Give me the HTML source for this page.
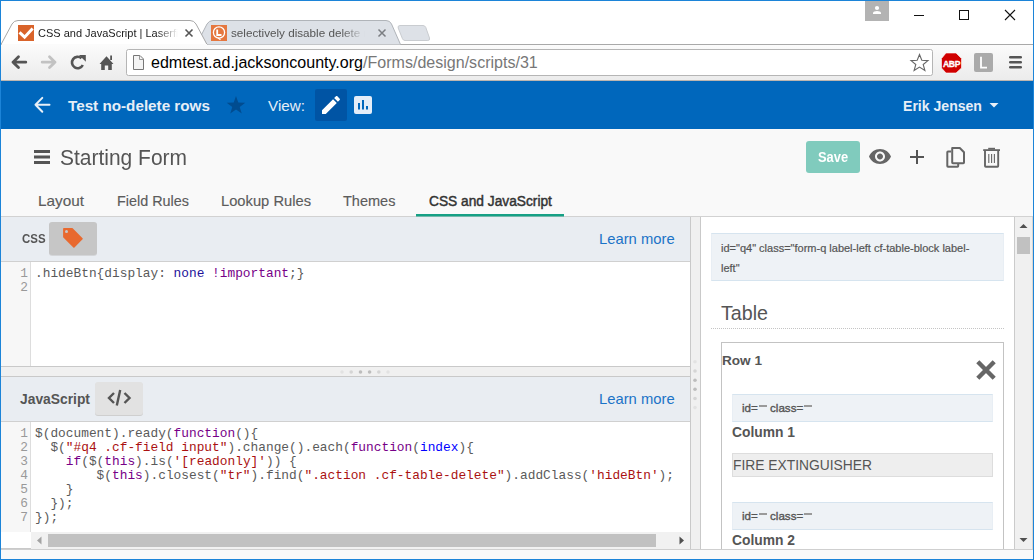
<!DOCTYPE html>
<html><head><meta charset="utf-8">
<style>
*{margin:0;padding:0;box-sizing:border-box}
html,body{width:1034px;height:560px;overflow:hidden;background:#fff;font-family:"Liberation Sans",sans-serif}
.a{position:absolute}
.nw{white-space:nowrap}
#frame{position:absolute;left:0;top:0;width:1034px;height:560px;border:1px solid #1c84d8;pointer-events:none;z-index:100}
#toolbar{left:1px;top:45px;width:1032px;height:36px;background:linear-gradient(#fbfbfb,#ebebeb)}
#hdr{left:1px;top:81px;width:1032px;height:48px;background:#0067bc}
#sub{left:1px;top:129px;width:1032px;height:88px;background:#f9f9f9;border-bottom:1px solid #d2d2d2}
.ptab{top:191px;font-size:14.6px;color:#5c5c5c;line-height:20px;-webkit-text-stroke:0.15px #5c5c5c}
.phdr{background:#e9edf2;border-bottom:1px solid #d0d0d0}
.code{font-family:"Liberation Mono",monospace;font-size:12.83px;line-height:14px;color:#5a5a5a;white-space:pre}
.ln{font-family:"Liberation Mono",monospace;font-size:12.83px;line-height:14px;color:#999;text-align:right;white-space:pre}
.k{color:#770088}.s{color:#aa1111}.at{color:#221199}.df{color:#0000ff}
.lm{font-size:14.8px;color:#1b73c7}
</style></head><body>
<div id="frame"></div>

<!-- TAB STRIP -->
<svg class="a" style="left:0;top:0" width="1034" height="46">
  <rect x="0" y="44" width="1034" height="1" fill="#a9a9a9"/>
  <path d="M196.5,44.5 L207,24 Q209,20.5 213,20.5 L386,20.5 Q390,20.5 391.5,24 L400.5,44.5" fill="#dde1e7" stroke="#b0b4b9" stroke-width="1"/>
  <path d="M400,25.5 L423,25.5 Q425,25.5 425.8,27.5 L429.5,38 Q430.2,40.5 427.8,40.5 L405,40.5 Q403.2,40.5 402.5,38.8 L398.2,28 Q397.5,25.5 400,25.5 Z" fill="#dde1e7" stroke="#c9ccd0"/>
  <path d="M1,44.5 L12,24 Q14,20.5 18,20.5 L190,20.5 Q194,20.5 196,24 L207,44.5" fill="#fff" stroke="#a7a7a7" stroke-width="1"/>
  <rect x="2" y="44" width="205" height="1" fill="#fbfbfb"/>
  <!-- active favicon -->
  <rect x="18" y="25" width="16" height="16" fill="#d9632a"/>
  <path d="M20.6,33.4 L24.6,37.2 L31.6,29.6" fill="none" stroke="#fff" stroke-width="3" stroke-linecap="square"/>
  <!-- close x active -->
  <path d="M185.5,29.5 L192.5,36.5 M192.5,29.5 L185.5,36.5" stroke="#555" stroke-width="1.6"/>
  <!-- inactive favicon -->
  <rect x="211" y="25" width="16" height="16" fill="#e5773f"/>
  <circle cx="219" cy="32.5" r="5.6" fill="none" stroke="#fff" stroke-width="1.3"/>
  <path d="M217.2,29.5 L217.2,35 L221.5,35" fill="none" stroke="#fff" stroke-width="1.8"/>
  <path d="M218,38 L220.5,39.8" stroke="#fff" stroke-width="1.2"/>
  <path d="M378.5,29.5 L385.5,36.5 M385.5,29.5 L378.5,36.5" stroke="#7b7e82" stroke-width="1.5"/>
  <!-- window controls -->
  <rect x="865" y="1" width="24" height="20" fill="#b3b3b3"/>
  <circle cx="877" cy="8" r="2.1" fill="#fff"/>
  <path d="M873,14 L873,12.8 Q873.5,10.9 877,10.9 Q880.5,10.9 881,12.8 L881,14 Z" fill="#fff"/>
  <rect x="914" y="15" width="10" height="1" fill="#111"/>
  <rect x="959.5" y="10.5" width="9" height="9" fill="none" stroke="#111" stroke-width="1"/>
  <path d="M1005,10 L1015,20 M1015,10 L1005,20" stroke="#111" stroke-width="1.1"/>
</svg>
<div class="a nw" style="left:38px;top:24px;font-size:11px;line-height:18px;color:#222;width:140px;overflow:hidden;-webkit-mask-image:linear-gradient(90deg,#000 85%,transparent)">CSS and JavaScript | Laserfiche Forms</div>
<div class="a nw" style="left:231px;top:24px;font-size:11.7px;line-height:18px;color:#555;width:138px;overflow:hidden;-webkit-mask-image:linear-gradient(90deg,#000 80%,transparent 97%)">selectively disable delete rows</div>

<!-- TOOLBAR -->
<div class="a" id="toolbar"></div>
<svg class="a" style="left:0;top:44px" width="1034" height="37">
  <!-- back -->
  <path d="M13,18.2 L25.8,18.2 M18.5,12.8 L13,18.2 L18.5,23.6" fill="none" stroke="#555" stroke-width="2.8" stroke-linecap="round" stroke-linejoin="round"/>
  <path d="M55,18.2 L42.2,18.2 M49.5,12.8 L55,18.2 L49.5,23.6" fill="none" stroke="#c2c2c2" stroke-width="2.8" stroke-linecap="round" stroke-linejoin="round"/>
  <!-- reload -->
  <path d="M81.5,14.3 A5.7,5.7 0 1 0 82.8,21" fill="none" stroke="#555" stroke-width="2.6"/>
  <path d="M79,11 L85.8,11 L85.8,17.8 Z" fill="#555"/>
  <!-- home -->
  <path d="M99.5,20 L106.5,12.2 L113.5,20 L111.8,20 L111.8,26 L108.2,26 L108.2,21.5 L104.8,21.5 L104.8,26 L101.2,26 L101.2,20 Z" fill="#555"/>
  <rect x="110.2" y="11.5" width="1.8" height="4.5" fill="#555"/>
  <!-- omnibox -->
  <rect x="126.5" y="5.5" width="806" height="26" rx="2" fill="#fff" stroke="#b5b5b5"/>
  <path d="M133.5,11.5 L140,11.5 L143.5,15 L143.5,25.5 L133.5,25.5 Z" fill="#f4f4f4" stroke="#777"/>
  <path d="M139.5,11.5 L139.5,15.5 L143.5,15.5" fill="none" stroke="#999"/>
  <!-- star -->
  <path d="M919.5,10.5 L921.8,16.3 L928,16.6 L923.2,20.5 L924.9,26.5 L919.5,23.1 L914.1,26.5 L915.8,20.5 L911,16.6 L917.2,16.3 Z" fill="none" stroke="#666" stroke-width="1.1"/>
  <!-- abp -->
  <path d="M946,9 L956,9 L961.5,14.5 L961.5,24 L956,29 L946,29 L941.5,24 L941.5,14.5 Z" fill="#d00000" stroke="#fff" stroke-width="0.6"/>
  <text x="951.5" y="22.5" font-family="Liberation Sans" font-weight="bold" font-size="8.6" letter-spacing="-0.4" fill="#fff" stroke="#fff" stroke-width="0.3" text-anchor="middle">ABP</text>
  <!-- L -->
  <rect x="974" y="9" width="19" height="19" rx="2" fill="#aaa"/>
  <path d="M981,12.7 L981,23.6 L987,23.6" fill="none" stroke="#fff" stroke-width="1.8"/>
  <!-- menu -->
  <rect x="1009" y="12" width="13" height="2.6" rx="1.3" fill="#555"/>
  <rect x="1009" y="17" width="13" height="2.6" rx="1.3" fill="#555"/>
  <rect x="1009" y="22" width="13" height="2.6" rx="1.3" fill="#555"/>
  <rect x="0" y="36" width="1034" height="1" fill="#bdb6b0"/>
</svg>
<div class="a nw" style="left:151px;top:52px;font-size:16.06px;line-height:20px;color:#000">edmtest.ad.jacksoncounty.org<span style="color:#777">/Forms/design/scripts/31</span></div>

<!-- BLUE HEADER -->
<div class="a" id="hdr"></div>
<svg class="a" style="left:0;top:81px" width="1034" height="48">
  <path d="M35.5,23.8 L49.5,23.8 M42.3,16.9 L35.5,23.8 L42.3,30.7" fill="none" stroke="#e8f0f8" stroke-width="2" stroke-linecap="round" stroke-linejoin="round"/>
  <path d="M236.00,14.92 L238.29,21.54 L245.30,21.68 L239.71,25.91 L241.75,32.61 L236.00,28.60 L230.25,32.61 L232.29,25.91 L226.70,21.68 L233.71,21.54 Z" fill="#004c90"/>
  <rect x="315" y="8" width="32" height="32" rx="2" fill="#0054a4"/>
  <path transform="translate(319,12)" d="M3 17.25V21h3.75L17.81 9.94l-3.75-3.75L3 17.25zM20.71 7.04c.39-.39.39-1.02 0-1.41l-2.34-2.34c-.39-.39-1.02-.39-1.41 0l-1.83 1.83 3.75 3.75 1.830-1.83z" fill="#fff"/>
  <rect x="354" y="15" width="18" height="18" rx="2" fill="#e3edf8"/>
  <rect x="358" y="22" width="2" height="6.5" fill="#0067bc"/>
  <rect x="362" y="19" width="2" height="9.5" fill="#0067bc"/>
  <rect x="366" y="25" width="2" height="3.5" fill="#0067bc"/>
  <path d="M989.5,103 L998.5,103 L994,107.5 Z" transform="translate(0,-81)" fill="#e8f0f8"/>
</svg>
<div class="a nw" style="left:68px;top:96px;font-size:15.24px;line-height:20px;font-weight:bold;color:#e6eef7">Test no-delete rows</div>
<div class="a nw" style="left:268px;top:96px;font-size:15.24px;line-height:20px;color:#e6eef7">View:</div>
<div class="a nw" style="left:903px;top:96px;font-size:14.07px;line-height:20px;font-weight:bold;color:#e6eef7">Erik Jensen</div>

<!-- SUB HEADER -->
<div class="a" id="sub"></div>
<svg class="a" style="left:0;top:129px" width="1034" height="88">
  <rect x="34" y="21" width="16" height="3" fill="#555"/>
  <rect x="34" y="26.5" width="16" height="3" fill="#555"/>
  <rect x="34" y="32" width="16" height="3" fill="#555"/>
  <rect x="806" y="12" width="54" height="32" rx="3" fill="#80cbbd"/>
  <!-- eye -->
  <path transform="translate(868,15.5)" d="M12 4.5C7 4.5 2.73 7.610 1 12c1.73 4.39 6 7.5 11 7.5s9.27-3.11 11-7.5c-1.73-4.39-6-7.5-11-7.5zM12 17c-2.76 0-5-2.24-5-5s2.24-5 5-5 5 2.24 5 5-2.24 5-5 5zm0-8c-1.66 0-3 1.34-3 3s1.34 3 3 3 3-1.34 3-3-1.34-3-3-3z" fill="#666"/>
  <!-- plus -->
  <path d="M917,21 L917,35 M910,28 L924,28" stroke="#555" stroke-width="2"/>
  <!-- copy -->
  <path d="M951,22.5 L948,22.5 Q947.3,22.5 947.3,23.2 L947.3,37 Q947.3,37.7 948,37.7 L957.5,37.7 Q958.2,37.7 958.2,37 L958.2,34.5" fill="none" stroke="#666" stroke-width="2"/>
  <path d="M952.2,19 L959.8,19 L964,23.2 L964,33.5 Q964,34.2 963.3,34.2 L952.9,34.2 Q952.2,34.2 952.2,33.5 Z" fill="none" stroke="#666" stroke-width="2" stroke-linejoin="round"/>
  <!-- trash -->
  <rect x="983.2" y="20.2" width="16.8" height="1.8" fill="#666"/>
  <rect x="988.2" y="18.8" width="6.8" height="1.8" fill="#666"/>
  <path d="M985,22 L985,37 Q985,37.8 985.8,37.8 L997.4,37.8 Q998.2,37.8 998.2,37 L998.2,22" fill="none" stroke="#666" stroke-width="1.9"/>
  <path d="M988.8,25 L988.8,34 M991.6,25 L991.6,34 M994.4,25 L994.4,34" stroke="#666" stroke-width="1.1"/>
  <rect x="416" y="85" width="148" height="2.5" fill="#16a085"/>
</svg>
<div class="a nw" style="left:60px;top:145px;font-size:22px;line-height:26px;color:#555;transform:scaleX(0.953);transform-origin:0 0">Starting Form</div>
<div class="a nw" style="left:818px;top:147px;font-size:14px;line-height:20px;font-weight:bold;color:#fff;transform:scaleX(0.92);transform-origin:0 0">Save</div>
<div class="a nw ptab" style="left:38px;font-size:15.32px">Layout</div>
<div class="a nw ptab" style="left:117px;font-size:14.39px">Field Rules</div>
<div class="a nw ptab" style="left:221px;font-size:14.72px">Lookup Rules</div>
<div class="a nw ptab" style="left:343px;font-size:14.53px">Themes</div>
<div class="a nw ptab" style="left:429px;top:192px;font-size:13.74px;color:#333;-webkit-text-stroke:0.45px #333">CSS and JavaScript</div>

<!-- LEFT PANEL -->
<div class="a phdr" style="left:1px;top:217px;width:690px;height:45px"></div>
<div class="a nw" style="left:21.5px;top:230px;font-size:13.5px;line-height:18px;font-weight:bold;color:#555;transform:scaleX(0.85);transform-origin:0 0">CSS</div>
<div class="a" style="left:49px;top:222px;width:48px;height:33px;background:#c6c6c6;border-radius:3px;box-shadow:0 1px 0 #d4d6d9"></div>
<svg class="a" style="left:49px;top:222px" width="48" height="33">
  <path d="M14.9,6.8 L23.1,6.8 L33,16.8 L24.9,24.9 L14.9,15 Z" fill="#e8692f" stroke="#e8692f" stroke-width="1.6" stroke-linejoin="round"/>
  <circle cx="17.5" cy="9.5" r="1.5" fill="#c8c8c8"/>
</svg>
<div class="a nw lm" style="left:599px;top:230px;line-height:18px">Learn more</div>
<!-- css editor -->
<div class="a" style="left:1px;top:262px;width:690px;height:105px;background:#fff;border-bottom:1px solid #c9c9c9"></div>
<div class="a" style="left:1px;top:262px;width:30px;height:104px;background:#f7f7f7;border-right:1px solid #ddd"></div>
<div class="a ln" style="left:1px;top:267px;width:27px">1
2</div>
<div class="a code" style="left:35px;top:267px">.hideBtn{display: <span class="at">none</span> <span class="k">!important</span>;}</div>
<!-- h splitter -->
<div class="a" style="left:1px;top:367px;width:690px;height:10px;background:#f0f0f0;border-bottom:1px solid #c9c9c9"></div>
<svg class="a" style="left:330px;top:367px" width="70" height="9">
  <circle cx="12" cy="5" r="1.8" fill="#e2e2e2"/><circle cx="21.2" cy="5" r="1.8" fill="#d5d5d5"/><circle cx="30.5" cy="5" r="1.8" fill="#bdbdbd"/><circle cx="39.6" cy="5" r="1.8" fill="#bdbdbd"/><circle cx="48.8" cy="5" r="1.8" fill="#d5d5d5"/><circle cx="58" cy="5" r="1.8" fill="#e2e2e2"/>
</svg>
<div class="a phdr" style="left:1px;top:377px;width:690px;height:45px"></div>
<div class="a nw" style="left:20px;top:390px;font-size:13.84px;line-height:18px;font-weight:bold;color:#555">JavaScript</div>
<div class="a" style="left:95px;top:382px;width:48px;height:33px;background:#e2e2e2;border-radius:3px;box-shadow:0 1px 0 #cfcfcf"></div>
<svg class="a" style="left:95px;top:382px" width="48" height="33">
  <path d="M19,11 L14,16 L19,21 M29.5,11 L34.5,16 L29.5,21 M25.2,8 L21.8,23.5" fill="none" stroke="#555" stroke-width="2.4"/>
</svg>
<div class="a nw lm" style="left:599px;top:390px;line-height:18px">Learn more</div>
<!-- js editor -->
<div class="a" style="left:1px;top:422px;width:690px;height:127px;background:#fff;border-bottom:1px solid #c9c9c9"></div>
<div class="a" style="left:1px;top:422px;width:30px;height:110px;background:#f7f7f7;border-right:1px solid #ddd"></div>
<div class="a ln" style="left:1px;top:427px;width:27px">1
2
3
4
5
6
7</div>
<div class="a code" style="left:35px;top:427px">$(document).ready(<span class="k">function</span>(){
  $(<span class="s">"#q4 .cf-field input"</span>).change().each(<span class="k">function</span>(<span class="df">index</span>){
    <span class="k">if</span>($(<span class="k">this</span>).is(<span class="s">'[readonly]'</span>)) {
        $(<span class="k">this</span>).closest(<span class="s">"tr"</span>).find(<span class="s">".action .cf-table-delete"</span>).addClass(<span class="s">'hideBtn'</span>);
    }
  });
});</div>
<!-- h scrollbar -->
<div class="a" style="left:31px;top:532px;width:659px;height:17px;background:#f1f1f1"></div>
<svg class="a" style="left:31px;top:532px" width="659" height="17">
  <path d="M6,8.5 L10.5,4.5 L10.5,12.5 Z" fill="#a3a3a3"/>
  <rect x="17" y="2" width="608" height="13" fill="#c1c1c1"/>
  <path d="M653,8.5 L648.5,4.5 L648.5,12.5 Z" fill="#505050"/>
</svg>
<!-- v splitter -->
<div class="a" style="left:690px;top:217px;width:10px;height:332px;background:#f0f0f0;border-left:1px solid #c9c9c9"></div>
<svg class="a" style="left:691px;top:355px" width="8" height="60">
  <circle cx="4" cy="6.7" r="1.8" fill="#e2e2e2"/><circle cx="4" cy="16" r="1.8" fill="#d5d5d5"/><circle cx="4" cy="25.2" r="1.8" fill="#bdbdbd"/><circle cx="4" cy="34.2" r="1.8" fill="#bdbdbd"/><circle cx="4" cy="43.5" r="1.8" fill="#d5d5d5"/><circle cx="4" cy="52.6" r="1.8" fill="#e2e2e2"/>
</svg>

<!-- RIGHT PANEL -->
<div class="a" style="left:700px;top:217px;width:314px;height:332px;background:#fff;overflow:hidden">
  <div class="a" style="left:11px;top:16px;width:293px;height:48px;background:#eef2f6;border:1px solid #d6e4ef;border-left-color:#e8eef4;border-right-color:#e8eef4"></div>
  <div class="a nw" style="left:21px;top:21px;width:270px;font-size:11px;line-height:20px;color:#555;-webkit-text-stroke:0.2px #555">id="q4" class="form-q label-left cf-table-block label-<br>left"</div>
  <div class="a nw" style="left:21px;top:84px;font-size:19.66px;line-height:24px;color:#555">Table</div>
  <div class="a" style="left:11px;top:111px;width:293px;height:0;border-top:1px dotted #c4c4c4"></div>
  <div class="a" style="left:21px;top:125px;width:283px;height:260px;border:1px solid #c3c3c3"></div>
  <div class="a nw" style="left:22px;top:135px;font-size:13.58px;line-height:18px;font-weight:bold;color:#555">Row 1</div>
  <svg class="a" style="left:275px;top:142px" width="22" height="22"><path d="M2.8,2.8 L19.2,19.2 M19.2,2.8 L2.8,19.2" stroke="#666" stroke-width="4.4"/></svg>
  <div class="a" style="left:32px;top:177px;width:261px;height:28px;background:#eef2f6;border:1px solid #d6e4ef;border-left-color:#e8eef4;border-right-color:#e8eef4"></div>
  <div class="a nw" style="left:42px;top:182px;font-size:11.6px;line-height:18px;color:#555;-webkit-text-stroke:0.35px #555">id=<span style="display:inline-block;width:8px;height:2px;background:#9a9a9a;vertical-align:5.5px;margin-left:1px"></span> class=<span style="display:inline-block;width:8px;height:2px;background:#9a9a9a;vertical-align:5.5px;margin-left:1px"></span></div>
  <div class="a nw" style="left:32px;top:206px;font-size:13.83px;line-height:18px;font-weight:bold;color:#555">Column 1</div>
  <div class="a" style="left:32px;top:236px;width:261px;height:24px;background:#eee;border:1px solid #ddd"></div>
  <div class="a nw" style="left:33px;top:239px;font-size:13.82px;line-height:18px;color:#555">FIRE EXTINGUISHER</div>
  <div class="a" style="left:32px;top:285px;width:261px;height:28px;background:#eef2f6;border:1px solid #d6e4ef;border-left-color:#e8eef4;border-right-color:#e8eef4"></div>
  <div class="a nw" style="left:42px;top:290px;font-size:11.6px;line-height:18px;color:#555;-webkit-text-stroke:0.35px #555">id=<span style="display:inline-block;width:8px;height:2px;background:#9a9a9a;vertical-align:5.5px;margin-left:1px"></span> class=<span style="display:inline-block;width:8px;height:2px;background:#9a9a9a;vertical-align:5.5px;margin-left:1px"></span></div>
  <div class="a nw" style="left:32px;top:314px;font-size:13.83px;line-height:18px;font-weight:bold;color:#555">Column 2</div>
</div>
<!-- v scrollbar -->
<div class="a" style="left:1014px;top:217px;width:19px;height:332px;background:#f0f0f0;border-left:1px solid #cbcbcb;border-right:1px solid #dcd6d0"></div>
<svg class="a" style="left:1014px;top:217px" width="19" height="332">
  <path d="M9.5,7 L13.5,11 L5.5,11 Z" fill="#505050"/>
  <rect x="3" y="20" width="13" height="17" fill="#c1c1c1"/>
  <path d="M9.5,325 L13.5,321 L5.5,321 Z" fill="#505050"/>
</svg>
<div class="a" style="left:700px;top:217px;width:1px;height:332px;background:#c9c9c9"></div>
<!-- bottom strip -->
<div class="a" style="left:1px;top:549px;width:1032px;height:10px;background:#f9f9f9;border-top:1px solid #cfcfcf"></div>
</body></html>
